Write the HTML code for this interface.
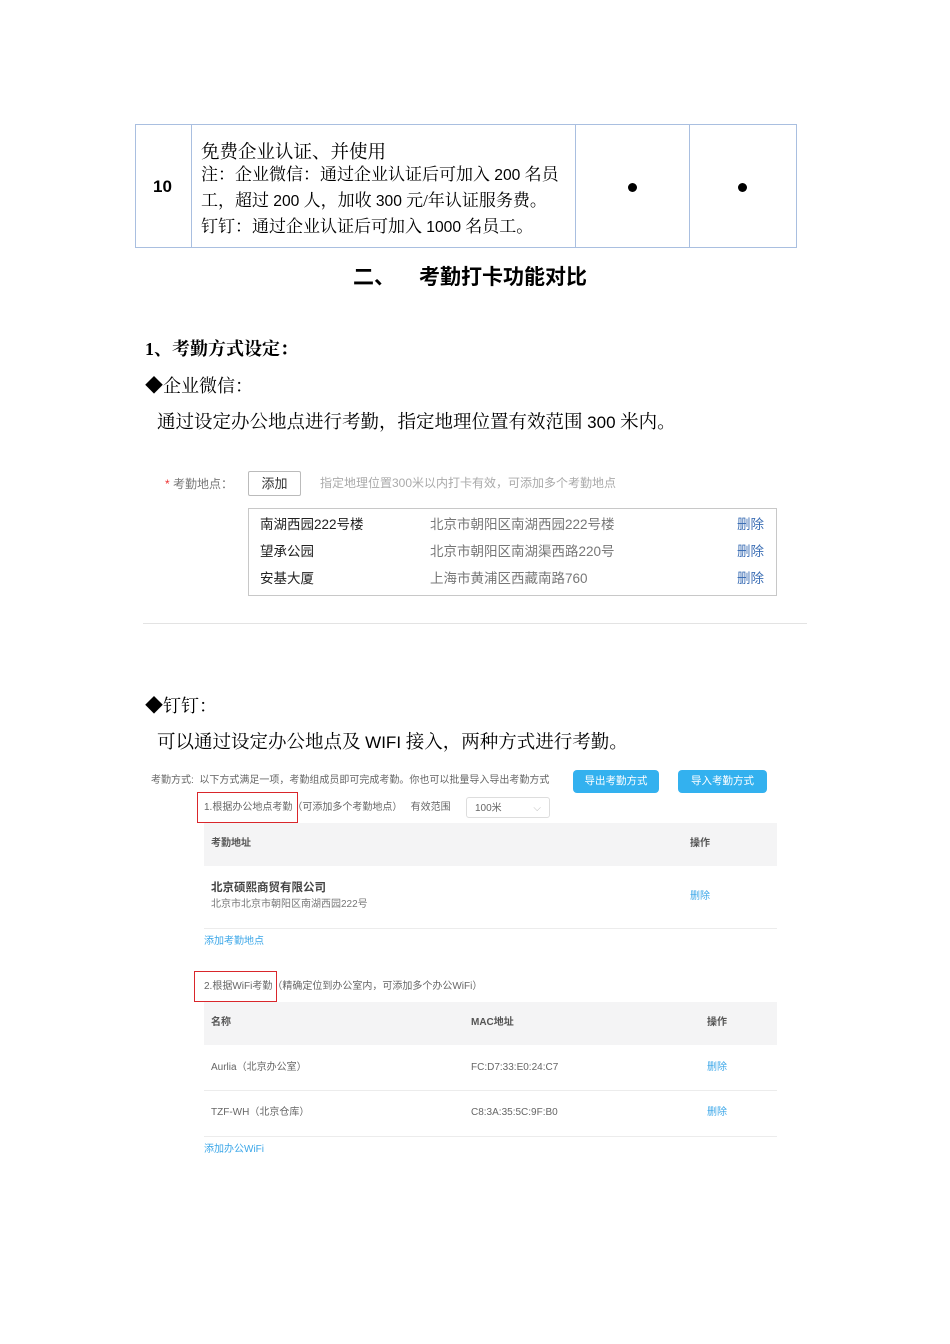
<!DOCTYPE html>
<html><head><meta charset="utf-8"><style>
body{margin:0;background:#fff;}
#p{position:relative;width:950px;height:1344px;overflow:hidden;font-family:"Liberation Serif","Noto Serif CJK SC",serif;color:#000;}
.a{position:absolute;white-space:nowrap;}
.s{font-family:"Liberation Sans","Noto Sans CJK SC",sans-serif;}
.v{position:absolute;background:#a9bfe0;}
.n{font-family:"Liberation Sans",sans-serif;font-size:0.92em;}
</style></head><body><div id="p">
<div class="v" style="left:135px;top:124px;width:662px;height:1px"></div>
<div class="v" style="left:135px;top:247px;width:662px;height:1px"></div>
<div class="v" style="left:135px;top:124px;width:1px;height:124px"></div>
<div class="v" style="left:191px;top:124px;width:1px;height:124px"></div>
<div class="v" style="left:575px;top:124px;width:1px;height:124px"></div>
<div class="v" style="left:689px;top:124px;width:1px;height:124px"></div>
<div class="v" style="left:796px;top:124px;width:1px;height:124px"></div>
<div class="a s" style="left:153px;top:177px;font-size:17px;font-weight:bold">10</div>
<div class="a" style="left:201px;top:138px;font-size:18.5px">免费企业认证、并使用</div>
<div class="a" style="left:201px;top:162px;font-size:17px;line-height:25px">注：企业微信：通过企业认证后可加入 <span class="n">200</span> 名员<br>工，超过 <span class="n">200</span> 人，加收 <span class="n">300</span> 元/年认证服务费。<br>钉钉：通过企业认证后可加入 <span class="n">1000</span> 名员工。</div>
<div class="a" style="left:628px;top:183px;width:9px;height:9px;border-radius:50%;background:#000"></div>
<div class="a" style="left:738px;top:183px;width:9px;height:9px;border-radius:50%;background:#000"></div>
<div class="a s" style="left:353px;top:261px;font-size:21px;font-weight:bold">二、</div>
<div class="a s" style="left:419px;top:261px;font-size:21px;font-weight:bold">考勤打卡功能对比</div>
<div class="a" style="left:145px;top:335px;font-size:18px;font-weight:bold">1、考勤方式设定：</div>
<div class="a" style="left:145px;top:372px;font-size:18px">◆企业微信：</div>
<div class="a" style="left:157px;top:408px;font-size:18.5px">通过设定办公地点进行考勤，指定地理位置有效范围 <span class="n">300</span> 米内。</div>
<div class="a s" style="left:165px;top:475px;font-size:12px;color:#777"><span style="color:#e33">*</span> 考勤地点：</div>
<div class="a s" style="left:248px;top:471px;width:51px;height:23px;border:1px solid #bbb;border-radius:2px;font-size:13px;line-height:23px;text-align:center;color:#333">添加</div>
<div class="a s" style="left:320px;top:474px;font-size:12px;color:#aaa">指定地理位置300米以内打卡有效，可添加多个考勤地点</div>
<div class="a" style="left:248px;top:508px;width:527px;height:86px;border:1px solid #c8c8c8"></div>
<div class="a s" style="left:260px;top:511px;font-size:13.5px;line-height:27px;color:#222">南湖西园222号楼<br>望承公园<br>安基大厦</div>
<div class="a s" style="left:430px;top:511px;font-size:13.5px;line-height:27px;color:#777">北京市朝阳区南湖西园222号楼<br>北京市朝阳区南湖渠西路220号<br>上海市黄浦区西藏南路760</div>
<div class="a s" style="left:737px;top:511px;font-size:13.5px;line-height:27px;color:#3d6fb5">删除<br>删除<br>删除</div>
<div class="a" style="left:143px;top:623px;width:664px;height:1px;background:#e3e3e3"></div>
<div class="a" style="left:145px;top:692px;font-size:18px">◆钉钉：</div>
<div class="a" style="left:157px;top:728px;font-size:18.5px">可以通过设定办公地点及 <span class="n">WIFI</span> 接入，两种方式进行考勤。</div>
<div class="s" style="position:absolute;left:0;top:0;font-size:10px;line-height:14px;color:#666">
<div class="a" style="left:151px;top:774px">考勤方式:&nbsp; 以下方式满足一项，考勤组成员即可完成考勤。你也可以批量导入导出考勤方式</div>
<div class="a" style="left:573px;top:770px;width:86px;height:23px;background:#33b1ef;border-radius:4px;color:#fff;line-height:23px;text-align:center;font-size:10.5px">导出考勤方式</div>
<div class="a" style="left:678px;top:770px;width:89px;height:23px;background:#33b1ef;border-radius:4px;color:#fff;line-height:23px;text-align:center;font-size:10.5px">导入考勤方式</div>
<div class="a" style="left:197px;top:792px;width:99px;height:29px;border:1.5px solid #d9262b"></div>
<div class="a" style="left:204px;top:801px">1.根据办公地点考勤（可添加多个考勤地点）&nbsp;&nbsp; 有效范围</div>
<div class="a" style="left:466px;top:797px;width:84px;height:21px;border:1px solid #ddd;border-radius:3px;line-height:21px;padding-left:8px;box-sizing:border-box">100米<span style="position:absolute;right:8px;color:#bbb">⌵</span></div>
<div class="a" style="left:204px;top:823px;width:573px;height:43px;background:#f4f4f5"></div>
<div class="a" style="left:211px;top:837px;font-weight:bold;color:#555">考勤地址</div>
<div class="a" style="left:690px;top:837px;font-weight:bold;color:#555">操作</div>
<div class="a" style="left:211px;top:881px;font-size:11.5px;font-weight:bold;color:#444">北京硕熙商贸有限公司</div>
<div class="a" style="left:211px;top:898px;color:#777">北京市北京市朝阳区南湖西园222号</div>
<div class="a" style="left:690px;top:890px;color:#3aa6e8">删除</div>
<div class="a" style="left:204px;top:928px;width:573px;height:1px;background:#ececec"></div>
<div class="a" style="left:204px;top:935px;color:#3aa6e8">添加考勤地点</div>
<div class="a" style="left:194px;top:971px;width:81px;height:29px;border:1.5px solid #d9262b"></div>
<div class="a" style="left:204px;top:980px">2.根据WiFi考勤（精确定位到办公室内，可添加多个办公WiFi）</div>
<div class="a" style="left:204px;top:1002px;width:573px;height:43px;background:#f4f4f5"></div>
<div class="a" style="left:211px;top:1016px;font-weight:bold;color:#555">名称</div>
<div class="a" style="left:471px;top:1016px;font-weight:bold;color:#555">MAC地址</div>
<div class="a" style="left:707px;top:1016px;font-weight:bold;color:#555">操作</div>
<div class="a" style="left:211px;top:1061px">Aurlia（北京办公室）</div>
<div class="a" style="left:471px;top:1061px">FC:D7:33:E0:24:C7</div>
<div class="a" style="left:707px;top:1061px;color:#3aa6e8">删除</div>
<div class="a" style="left:204px;top:1090px;width:573px;height:1px;background:#ececec"></div>
<div class="a" style="left:211px;top:1106px">TZF-WH（北京仓库）</div>
<div class="a" style="left:471px;top:1106px">C8:3A:35:5C:9F:B0</div>
<div class="a" style="left:707px;top:1106px;color:#3aa6e8">删除</div>
<div class="a" style="left:204px;top:1136px;width:573px;height:1px;background:#ececec"></div>
<div class="a" style="left:204px;top:1143px;color:#3aa6e8">添加办公WiFi</div>
</div>
</div></body></html>
